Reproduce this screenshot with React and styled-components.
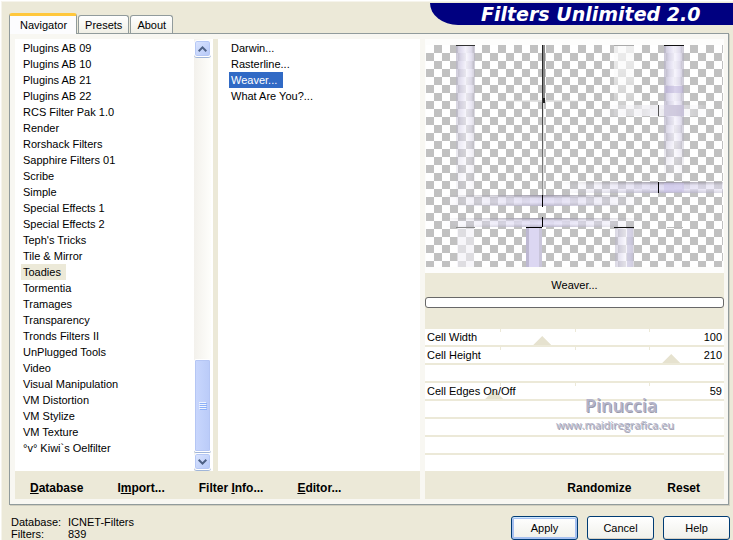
import React, { useState } from 'react';
import styled, { createGlobalStyle } from 'styled-components';

const GlobalStyle = createGlobalStyle`
* {
  box-sizing: border-box;
}
body {
  margin: 0;
  overflow: hidden;
  background: #ece9d8;
  color: #000;
  font: 11px/16px "Liberation Sans", Arial, sans-serif;
}
button, input {
  font: inherit;
  color: inherit;
  margin: 0;
}
`

const categories = [
  'Plugins AB 09', 'Plugins AB 10', 'Plugins AB 21', 'Plugins AB 22',
  'RCS Filter Pak 1.0', 'Render', 'Rorshack Filters', 'Sapphire Filters 01',
  'Scribe', 'Simple', 'Special Effects 1', 'Special Effects 2',
  "Teph's Tricks", 'Tile & Mirror', 'Toadies', 'Tormentia', 'Tramages',
  'Transparency', 'Tronds Filters II', 'UnPlugged Tools', 'Video',
  'Visual Manipulation', 'VM Distortion', 'VM Stylize', 'VM Texture',
  '°v° Kiwi`s Oelfilter',
];

const filters = ['Darwin...', 'Rasterline...', 'Weaver...', 'What Are You?...'];

const startParams = [
  { label: 'Cell Width', value: 100 },
  { label: 'Cell Height', value: 210 },
  {},
  { label: 'Cell Edges On/Off', value: 59 },
  {}, {}, {}, {},
];

function Preview() {
  return (
    <PreviewSvg viewBox="426 45 297 222" preserveAspectRatio="none" role="img" aria-label="Filter preview">
      <defs>
        <pattern id="checker" x="426" y="45" width="16" height="16" patternUnits="userSpaceOnUse">
          <rect width="16" height="16" fill="#fff" />
          <rect x="8" width="8" height="8" fill="#c1c1c1" />
          <rect y="8" width="8" height="8" fill="#c1c1c1" />
        </pattern>
        <linearGradient id="pillar">
          <stop offset="0" stopColor="#b4b0c4" stopOpacity=".7" />
          <stop offset=".25" stopColor="#dcd8ec" stopOpacity=".9" />
          <stop offset=".55" stopColor="#f6f4fd" stopOpacity=".9" />
          <stop offset=".8" stopColor="#e2def0" stopOpacity=".9" />
          <stop offset="1" stopColor="#aeaabb" stopOpacity=".6" />
        </linearGradient>
        <linearGradient id="beam" x2="0" y2="1">
          <stop offset="0" stopColor="#96929f" />
          <stop offset=".3" stopColor="#dcd8ee" />
          <stop offset=".65" stopColor="#e4e0f6" />
          <stop offset="1" stopColor="#b9b5cb" />
        </linearGradient>
        <linearGradient id="down" x2="0" y2="1">
          <stop offset="0" stopColor="#fff" />
          <stop offset=".4" stopColor="#bbb" />
          <stop offset="1" stopColor="#000" />
        </linearGradient>
        <linearGradient id="middle">
          <stop offset="0" stopColor="#000" />
          <stop offset=".5" stopColor="#fff" />
          <stop offset="1" stopColor="#000" />
        </linearGradient>
        <mask id="fadeDown" maskContentUnits="objectBoundingBox">
          <rect width="1" height="1" fill="url(#down)" />
        </mask>
        <mask id="fadeSides" maskContentUnits="objectBoundingBox">
          <rect width="1" height="1" fill="url(#middle)" />
        </mask>
        <linearGradient id="edge" x2="0" y2="1">
          <stop offset="0" stopColor="#222" />
          <stop offset=".35" stopColor="#333" />
          <stop offset="1" stopColor="#999" />
        </linearGradient>
      </defs>
      <rect x="426" y="45" width="297" height="222" fill="url(#checker)" />

      <rect x="456" y="45" width="19" height="170" fill="url(#pillar)" mask="url(#fadeDown)" />
      <rect x="614" y="45" width="20" height="78" fill="#fafafa" opacity=".8" mask="url(#fadeDown)" />
      <rect x="664" y="45" width="20" height="70" fill="url(#pillar)" />
      <rect x="664" y="115" width="20" height="66" fill="url(#pillar)" mask="url(#fadeDown)" />
      <rect x="665" y="86" width="18" height="7" fill="#b3a8d4" opacity=".45" />
      <rect x="664" y="105" width="20" height="11" fill="#a89ec8" opacity=".5" />
      <rect x="664" y="45" width="20" height="1" fill="#111" />
      <rect x="456" y="45" width="19" height="1" fill="#333" />
      <rect x="614" y="45" width="20" height="1" fill="#aaa" />

      <rect x="602" y="105" width="112" height="11" fill="#f1f0f5" mask="url(#fadeSides)" />
      <rect x="664" y="105" width="20" height="11" fill="#b3aaca" opacity=".45" />
      <rect x="658" y="105" width="1" height="11" fill="#555" />
      <rect x="496" y="100" width="94" height="2" fill="#ddd" mask="url(#fadeSides)" />

      <rect x="543" y="45" width="2" height="55" fill="#888" />
      <rect x="542" y="45" width="1" height="150" fill="url(#edge)" />
      <rect x="543" y="98" width="2" height="5" fill="#222" />
      <rect x="543" y="103" width="1" height="92" fill="#ddd" />

      <rect x="560" y="182" width="212" height="11" fill="url(#beam)" mask="url(#fadeSides)" />
      <rect x="658" y="182" width="1" height="11" fill="#000" />
      <rect x="664" y="183" width="20" height="9" fill="#c8c0e8" opacity=".5" />
      <rect x="442" y="195" width="202" height="11" fill="url(#beam)" mask="url(#fadeSides)" />
      <rect x="542" y="195" width="1" height="12" fill="#000" />
      <rect x="442" y="218" width="202" height="9" fill="url(#beam)" mask="url(#fadeSides)" />
      <rect x="542" y="217" width="1" height="10" fill="#000" />

      <rect x="457" y="227" width="17" height="40" fill="#f1f0f6" opacity=".6" />
      <rect x="456" y="227" width="19" height="1" fill="#888" />
      <rect x="526" y="227" width="16" height="40" fill="#dcd7f2" />
      <rect x="526" y="227" width="3" height="40" fill="#bdb8d2" />
      <rect x="539" y="227" width="3" height="40" fill="#c9c5da" />
      <rect x="526" y="227" width="16" height="1" fill="#000" />
      <rect x="615" y="227" width="19" height="40" fill="url(#pillar)" opacity=".7" />
      <rect x="627" y="227" width="6" height="40" fill="#c7c3dc" opacity=".6" />
      <rect x="614" y="227" width="20" height="1" fill="#111" />
      <rect x="667" y="227" width="16" height="1" fill="#bbb" />
    </PreviewSvg>
  )
}

function Arrow({ up }) {
  return (
    <svg width="9" height="6" viewBox="0 0 9 6" aria-hidden="true">
      <path d={up ? 'M.7 5.2 4.5 1.4 8.3 5.2' : 'M.7 .8 4.5 4.6 8.3 .8'} fill="none" stroke="#4d6185" strokeWidth="2" />
    </svg>
  )
}

function Param({ label, value, onChange }) {
  if (!label) return <ParamRow />
  return (
    <ParamRow>
      <Tick $at={25} /><Tick $at={50} /><Tick $at={75} />
      <Slider id={label} type="range" min="0" max="255" value={value} onChange={onChange} />
      <ParamLabel htmlFor={label}>{label}</ParamLabel>
      <ParamValue htmlFor={label}>{value}</ParamValue>
    </ParamRow>
  )
}

export default function App() {
  const [tab, setTab] = useState('Navigator');
  const [category, setCategory] = useState('Toadies');
  const [filter, setFilter] = useState('Weaver...');
  const [params, setParams] = useState(startParams);

  const change = (index) => (e) => {
    setParams(params.map((p, i) => (i === index ? { ...p, value: Number(e.target.value) } : p)));
  }

  return (
    <Window>
      <GlobalStyle />
      <Header>
        <Tabs role="tablist">
          {['Navigator', 'Presets', 'About'].map((name) => (
            <Tab key={name} role="tab" aria-selected={tab === name} $active={tab === name} onClick={() => setTab(name)}>
              {name}
            </Tab>
          ))}
        </Tabs>
        <Banner>Filters Unlimited 2.0</Banner>
      </Header>

      <Panel>
        <Browser>
          <Lists>
            <CategoryPane>
              <List>
                {categories.map((name) => (
                  <li key={name}>
                    <CategoryItem $selected={name === category} onClick={() => setCategory(name)}>{name}</CategoryItem>
                  </li>
                ))}
              </List>
              <Scrollbar>
                <ScrollButton aria-label="Scroll up"><Arrow up /></ScrollButton>
                <ScrollTrack />
                <ScrollThumb><i /><i /><i /><i /></ScrollThumb>
                <ScrollButton aria-label="Scroll down"><Arrow /></ScrollButton>
              </Scrollbar>
            </CategoryPane>
            <FilterPane>
              {filters.map((name) => (
                <li key={name}>
                  <FilterItem $selected={name === filter} onClick={() => setFilter(name)}>{name}</FilterItem>
                </li>
              ))}
            </FilterPane>
          </Lists>
          <Actions>
            <TextButton><u>D</u>atabase</TextButton>
            <TextButton>I<u>m</u>port...</TextButton>
            <TextButton>Filter <u>I</u>nfo...</TextButton>
            <TextButton><u>E</u>ditor...</TextButton>
          </Actions>
        </Browser>

        <Settings>
          <PreviewBox><Preview /></PreviewBox>
          <Status>
            <span>{filter}</span>
            <Progress />
          </Status>
          <Params>
            {params.map((p, i) => <Param key={i} {...p} onChange={change(i)} />)}
            <Watermark>
              <strong>Pinuccia</strong>
              <span>www.maidiregrafica.eu</span>
            </Watermark>
          </Params>
          <Actions $end>
            <TextButton>Randomize</TextButton>
            <TextButton>Reset</TextButton>
          </Actions>
        </Settings>
      </Panel>

      <Footer>
        <Info>
          <dt>Database:</dt><dd>ICNET-Filters</dd>
          <dt>Filters:</dt><dd>839</dd>
        </Info>
        <Buttons>
          <PushButton $primary>Apply</PushButton>
          <PushButton>Cancel</PushButton>
          <PushButton>Help</PushButton>
        </Buttons>
      </Footer>
    </Window>
  )
}

const Window = styled.main`
  border-top: 1px solid #fff;
  border-left: 1px solid #fff;
  box-shadow: inset 1px 1px #f6f4ec;
  padding: 2px 0 0 8px;
`

const Header = styled.header`
  display: flex;
  justify-content: space-between;
  height: 30px;
`

const Tabs = styled.div`
  display: flex;
  align-items: flex-end;
  gap: 1px;
`

const Tab = styled.button`
  position: relative;
  z-index: ${p => (p.$active ? 1 : 0)};
  height: ${p => (p.$active ? 21 : 18)}px;
  margin-bottom: ${p => (p.$active ? -1 : 0)}px;
  padding: ${p => (p.$active ? '0 9px 1px 10px' : '0 6px')};
  border: 1px solid #919b9c;
  border-top: ${p => (p.$active ? '3px solid #ffc73c' : '1px solid #919b9c')};
  border-bottom: 0;
  border-radius: 3px 3px 0 0;
  background: ${p => (p.$active ? '#fcfcfe' : 'linear-gradient(#fff, #f0efe6)')};
  font-size: 11px;
`

const Banner = styled.h1`
  width: 303px;
  height: 22px;
  margin: 0;
  padding-left: 51px;
  border-bottom-left-radius: 28px 22px;
  background: #000080;
  color: #fff;
  font: italic bold 19px/22px "DejaVu Sans", sans-serif;
  white-space: nowrap;
`

const Panel = styled.section`
  display: grid;
  grid-template-columns: 405fr 299fr;
  gap: 5px;
  margin-right: 4px;
  padding: 5px 4px 5px 5px;
  border: 1px solid #919b9c;
  background: #f8f7f2;
  box-shadow: 1px 1px #d0cebf;
`

const Browser = styled.div`
  display: flex;
  flex-direction: column;
`

const Lists = styled.div`
  display: grid;
  flex: 1;
  grid-template-columns: 198px 1fr;
  gap: 5px;
  background: #ece9d8;
`

const CategoryPane = styled.div`
  display: flex;
  justify-content: space-between;
  background: #fff;
  padding-right: 2px;
`

const List = styled.ul`
  margin: 0;
  padding: 1px 0 13px 6px;
  list-style: none;
`

const FilterPane = styled(List)`
  padding-left: 11px;
  background: #fff;
`

const ListItem = styled.button`
  display: block;
  height: 16px;
  padding: 0 2px;
  border: 0;
  line-height: 16px;
  white-space: nowrap;
`

const CategoryItem = styled(ListItem)`
  padding-right: ${p => (p.$selected ? 5 : 2)}px;
  background: ${p => (p.$selected ? '#ece9d8' : 'transparent')};
`

const FilterItem = styled(ListItem)`
  padding-right: 6px;
  background: ${p => (p.$selected ? '#316ac5' : 'transparent')};
  color: ${p => (p.$selected ? '#fff' : '#000')};
`

const Scrollbar = styled.div`
  display: flex;
  flex-direction: column;
  width: 17px;
  padding: 1px 0;
  background: linear-gradient(90deg, #f3f1ec, #fefefb);
`

const ScrollButton = styled.button`
  display: flex;
  align-items: center;
  justify-content: center;
  height: 17px;
  padding: 0;
  border: 1px solid #fff;
  border-radius: 3px;
  background: linear-gradient(135deg, #dbe5ff, #b5c8f7);
  box-shadow: inset 0 0 0 1px #b6c8f5, 0 1px #a0b5d8;
`

const ScrollTrack = styled.div`
  flex: 1;
`

const ScrollThumb = styled.div`
  display: flex;
  flex-direction: column;
  align-items: center;
  justify-content: center;
  gap: 1px;
  height: 93px;
  margin-bottom: 1px;
  border: 1px solid #fff;
  border-radius: 2px;
  background: linear-gradient(90deg, #c9d7fd, #bacbf8);
  box-shadow: inset 0 0 0 1px #b5c6f4, 0 1px #a0b5d8;

  i {
    width: 7px;
    height: 1px;
    background: #eef4fe;
    box-shadow: 1px 1px #8cb0f8;
  }
`

const Actions = styled.div`
  display: flex;
  align-items: center;
  justify-content: ${p => (p.$end ? 'flex-end' : 'flex-start')};
  gap: ${p => (p.$end ? 36 : 34)}px;
  height: ${p => (p.$end ? 26 : 28)}px;
  padding: ${p => (p.$end ? '3px 24px 0' : '5px 15px 0')};
  background: #ece9d8;
`

const TextButton = styled.button`
  padding: 0;
  border: 0;
  background: none;
  font-size: 12px;
  font-weight: bold;
`

const Settings = styled.div`
  display: flex;
  flex-direction: column;
`

const PreviewBox = styled.div`
  padding: 6px 1px;
  background: #fdfdfc;
`

const PreviewSvg = styled.svg`
  display: block;
  width: 100%;
  height: 222px;
`

const Status = styled.div`
  display: flex;
  flex-direction: column;
  height: 56px;
  padding-top: 4px;
  gap: 4px;
  background: #ece9d8;
  text-align: center;
`

const Progress = styled.div`
  height: 11px;
  border: 1px solid #686868;
  border-radius: 3px;
  background: #fff;
`

const Params = styled.div`
  position: relative;
  flex: 1;
  background: #ece9d8;
`

const ParamRow = styled.div`
  position: relative;
  display: flex;
  justify-content: space-between;
  height: 18px;
  padding: 0 2px;
  border-bottom: 2px solid #ece9d8;
  background: #fff;
`

const ParamLabel = styled.label`
  position: relative;
  pointer-events: none;
`

const ParamValue = styled.output`
  position: relative;
  pointer-events: none;
`

const Tick = styled.i`
  position: absolute;
  top: 0;
  left: ${p => p.$at}%;
  width: 1px;
  height: 3px;
  background: #ece9d8;
`

/* the slider hangs over both row ends by half a thumb */
const Slider = styled.input`
  position: absolute;
  bottom: 0;
  left: -9px;
  width: calc(100% + 18px);
  height: 9px;
  appearance: none;
  background: none;

  &::-webkit-slider-thumb {
    appearance: none;
    width: 18px;
    height: 9px;
    background: #e6e2cf;
    clip-path: polygon(50% 0, 100% 100%, 0 100%);
  }
`

const Watermark = styled.div`
  position: absolute;
  right: 50px;
  top: 64px;
  display: flex;
  flex-direction: column;
  align-items: center;
  color: #b4b4ca;
  text-shadow: 1px 1px #9a9aaa;
  font: 11px/13px "Open Sans", sans-serif;
  pointer-events: none;

  strong {
    padding-left: 12px;
    font-size: 18px;
    line-height: 25px;
    font-weight: 600;
  }
`

const Footer = styled.footer`
  display: flex;
  justify-content: space-between;
  padding: 11px 3px 0 2px;
`

const Info = styled.dl`
  display: grid;
  grid-template-columns: 57px auto;
  margin: 0;
  font-size: 11px;
  line-height: 12px;

  dd {
    margin: 0;
  }
`

const Buttons = styled.div`
  display: flex;
  gap: 9px;
`

const PushButton = styled.button`
  width: 67px;
  height: 24px;
  padding: 0;
  border: 1px solid #003c74;
  border-radius: 3px;
  background: linear-gradient(#fff, #f0f0ea);
  box-shadow: ${p => (p.$primary ? 'inset 0 1px #cee7ff, inset 0 0 0 2px #a6c0f0' : 'inset 0 -1px #d6d0c5')};
`
